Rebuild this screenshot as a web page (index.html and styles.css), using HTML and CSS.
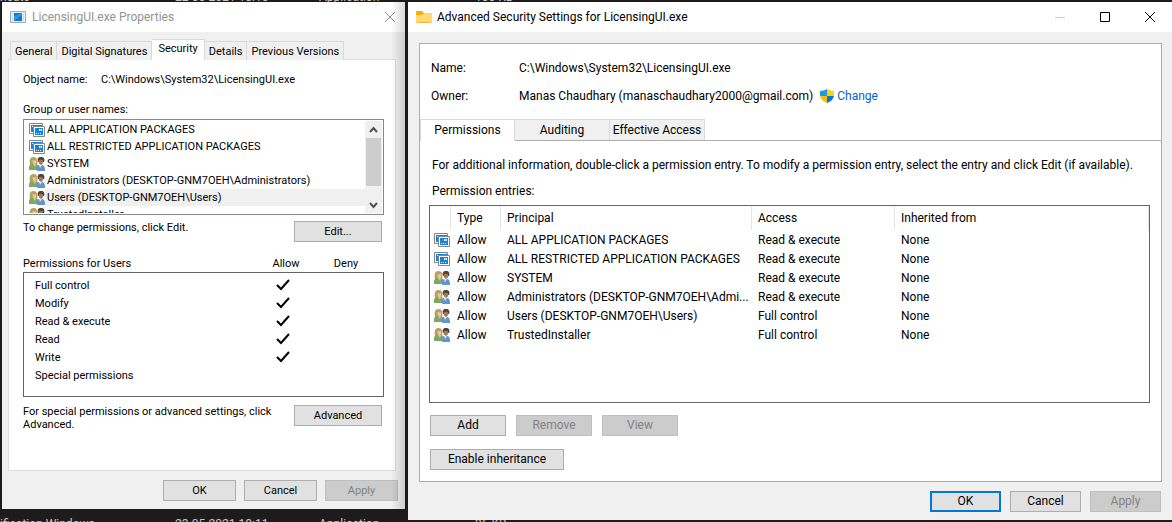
FILE: index.html
```html
<!DOCTYPE html>
<html lang="en">
<head>
<meta charset="utf-8">
<title>Advanced Security Settings for LicensingUI.exe</title>
<link rel="stylesheet" href="styles.css">
</head>
<body>
<svg class="defs" aria-hidden="true">
  <symbol id="package" viewBox="0 0 16 16">
    <path d="M.5 1.500h13v10H.5z" fill="#fff" stroke="#858585"/>
    <path d="M2 3h11v2H5v5H2z" fill="#1583dc"/>
    <path d="M3 4h1v1H3zM6 4h1v1H6zM8 4h1v1H8z" fill="#fff"/>
    <path d="M4.500 4.500h11v10h-11z" fill="#fff" stroke="#858585"/>
    <path d="M6 6h8v7H6z" fill="#1583dc"/>
    <path d="M10 7h3v2h-3zM7 11h1v1H7zM9 11h1v1H9zM11 11h1v1h-1z" fill="#fff"/>
    <path d="M11 7h1v2h-1z" fill="#84bff0"/>
  </symbol>
  <symbol id="people" viewBox="0 0 16 16">
    <path d="M1 9C0 4 1 1 4.500 1S9 4 8 9z" fill="#b5a062"/>
    <path d="M3.500 4Q6 5 7 3.500 8 8 5.500 8.500 3.500 8 3.500 4z" fill="#e5c7a0"/>
    <path d="M0 14V11c0-2 2-3 4-3h3c2 0 2 2 2 6z" fill="#7fa85d"/>
    <path d="M4 8h3l-1 3z" fill="#e0c29c"/>
    <path d="M9 6c-1-3 0-5 3-5s4 2 3 5z" fill="#4b4540"/>
    <path d="M9.500 4.500Q12 3 14 4.500 14.500 8 12 9 9.500 8 9.500 4.500z" fill="#a8774f"/>
    <path d="M7 14c0-3 1-5 4-5h2c2 0 3 2 3 5v1H9z" fill="#6494cc"/>
    <path d="M10 9h3l-2 3z" fill="#dfe8f3"/>
  </symbol>
  <symbol id="check" viewBox="0 0 14 12">
    <path d="M1 6l4 4 8-9" fill="none" stroke="#000" stroke-width="2"/>
  </symbol>
</svg>

<div class="backdrop" aria-hidden="true">
  <div class="file-row"><span>ncate</span><span>22-05-2021 18:10</span><span>Application</span><span>100 KB</span></div>
  <div class="file-row"><span>ification Windows</span><span>23-05-2021 18:11</span><span>Application</span><span>96 KB</span></div>
</div>

<main class="desktop">
  <section class="window properties" aria-label="LicensingUI.exe Properties">
    <header class="titlebar">
      <svg class="app-icon" viewBox="0 0 16 12"><path d="M.5.500h15v11H.5z" fill="#edf1f4" stroke="#9da7ae"/><path d="M2 3h1M2 5h1M2 7h1M2 9h1M13 3h1M13 5h1M13 7h1M13 9h1" stroke="#b4bec5"/><path d="M4 2h8v8H4z" fill="#0a78cf"/><path d="M4 10V5l8-3v2z" fill="#2d96e4"/></svg>
      <h1>LicensingUI.exe Properties</h1>
      <button class="caption" aria-label="Close"><svg viewBox="0 0 10 10"><path d="M0 0l10 10M10 0L0 10" stroke="#8c8c8c"/></svg></button>
    </header>
    <div class="prop-body">
      <div class="tabs" role="tablist">
        <button role="tab">General</button><button role="tab">Digital Signatures</button><button role="tab" class="active" aria-selected="true">Security</button><button role="tab">Details</button><button role="tab">Previous Versions</button>
      </div>
      <div class="sheet">
        <dl class="object"><dt>Object name:</dt><dd>C:\Windows\System32\LicensingUI.exe</dd></dl>
        <p class="label">Group or user names:</p>
        <div class="listbox">
          <ul>
            <li><svg><use href="#package"/></svg><span>ALL APPLICATION PACKAGES</span></li>
            <li><svg><use href="#package"/></svg><span>ALL RESTRICTED APPLICATION PACKAGES</span></li>
            <li><svg><use href="#people"/></svg><span>SYSTEM</span></li>
            <li><svg><use href="#people"/></svg><span>Administrators (DESKTOP-GNM7OEH\Administrators)</span></li>
            <li class="selected"><svg><use href="#people"/></svg><span>Users (DESKTOP-GNM7OEH\Users)</span></li>
            <li><svg><use href="#people"/></svg><span>TrustedInstaller</span></li>
          </ul>
          <div class="scrollbar">
            <svg viewBox="0 0 15 17"><path d="M4 11l3.500-4 3.500 4" fill="none" stroke="#505050" stroke-width="2"/></svg>
            <div class="thumb"></div>
            <svg viewBox="0 0 15 17"><path d="M4 7l3.500 4L11 7" fill="none" stroke="#505050" stroke-width="2"/></svg>
          </div>
        </div>
        <div class="action"><p>To change permissions, click Edit.</p><button class="btn">Edit...</button></div>
        <table class="perms">
          <thead><tr><th>Permissions for Users</th><th>Allow</th><th>Deny</th></tr></thead>
          <tbody>
            <tr><td>Full control</td><td><svg><use href="#check"/></svg></td><td></td></tr>
            <tr><td>Modify</td><td><svg><use href="#check"/></svg></td><td></td></tr>
            <tr><td>Read &amp; execute</td><td><svg><use href="#check"/></svg></td><td></td></tr>
            <tr><td>Read</td><td><svg><use href="#check"/></svg></td><td></td></tr>
            <tr><td>Write</td><td><svg><use href="#check"/></svg></td><td></td></tr>
            <tr><td>Special permissions</td><td></td><td></td></tr>
          </tbody>
        </table>
        <div class="action advanced"><p>For special permissions or advanced settings, click Advanced.</p><button class="btn">Advanced</button></div>
      </div>
      <footer><button class="btn">OK</button><button class="btn">Cancel</button><button class="btn" disabled>Apply</button></footer>
    </div>
  </section>

  <section class="window security" aria-label="Advanced Security Settings for LicensingUI.exe">
    <header class="titlebar">
      <svg class="folder" viewBox="0 0 16 14"><path d="M0 2Q0 1 1 1h5l2 2h7q1 0 1 1v4H0z" fill="#f4ae13"/><path d="M0 5h6l2-2h7q1 0 1 1v8q0 1-1 1H1q-1 0-1-1z" fill="#ffd871"/><path d="M1 12.500h14" stroke="#efb53c"/></svg>
      <h1>Advanced Security Settings for LicensingUI.exe</h1>
      <div class="captions">
        <button class="caption" aria-label="Minimize" disabled><svg viewBox="0 0 10 10"><path d="M0 5.500h10" stroke="#ccc"/></svg></button>
        <button class="caption" aria-label="Maximize"><svg viewBox="0 0 10 10"><path d="M.5.500h9v9h-9z" fill="none" stroke="#000"/></svg></button>
        <button class="caption" aria-label="Close"><svg viewBox="0 0 10 10"><path d="M0 0l10 10M10 0L0 10" stroke="#000"/></svg></button>
      </div>
    </header>
    <div class="sec-body">
      <div class="panel">
        <dl class="details">
          <dt>Name:</dt><dd>C:\Windows\System32\LicensingUI.exe</dd>
          <dt>Owner:</dt><dd>Manas Chaudhary (manaschaudhary2000@gmail.com)
            <a href="#"><svg class="shield" viewBox="0 0 14 14"><path d="M7 0Q4 2 0 2v5h7z" fill="#1b9be5"/><path d="M7 0q3 2 7 2v5H7z" fill="#ffd10a"/><path d="M0 7q1 5 7 7V7z" fill="#fbbd08"/><path d="M14 7q-1 5-7 7V7z" fill="#0b78cf"/></svg>Change</a></dd>
        </dl>
        <div class="tabs" role="tablist">
          <button role="tab" class="active" aria-selected="true">Permissions</button><button role="tab">Auditing</button><button role="tab">Effective Access</button>
        </div>
        <div class="tab-page">
          <p>For additional information, double-click a permission entry. To modify a permission entry, select the entry and click Edit (if available).</p>
          <p>Permission entries:</p>
          <div class="grid-box">
            <table class="entries">
              <colgroup><col class="c-icon"><col class="c-type"><col class="c-principal"><col class="c-access"><col></colgroup>
              <thead><tr><th></th><th>Type</th><th>Principal</th><th>Access</th><th>Inherited from</th></tr></thead>
              <tbody>
                <tr><td><svg><use href="#package"/></svg></td><td>Allow</td><td>ALL APPLICATION PACKAGES</td><td>Read &amp; execute</td><td>None</td></tr>
                <tr><td><svg><use href="#package"/></svg></td><td>Allow</td><td>ALL RESTRICTED APPLICATION PACKAGES</td><td>Read &amp; execute</td><td>None</td></tr>
                <tr><td><svg><use href="#people"/></svg></td><td>Allow</td><td>SYSTEM</td><td>Read &amp; execute</td><td>None</td></tr>
                <tr><td><svg><use href="#people"/></svg></td><td>Allow</td><td>Administrators (DESKTOP-GNM7OEH\Admi...</td><td>Read &amp; execute</td><td>None</td></tr>
                <tr><td><svg><use href="#people"/></svg></td><td>Allow</td><td>Users (DESKTOP-GNM7OEH\Users)</td><td>Full control</td><td>None</td></tr>
                <tr><td><svg><use href="#people"/></svg></td><td>Allow</td><td>TrustedInstaller</td><td>Full control</td><td>None</td></tr>
              </tbody>
            </table>
          </div>
          <div class="row"><button class="btn">Add</button><button class="btn" disabled>Remove</button><button class="btn" disabled>View</button></div>
          <div class="row"><button class="btn wide">Enable inheritance</button></div>
        </div>
      </div>
      <footer><button class="btn default">OK</button><button class="btn">Cancel</button><button class="btn" disabled>Apply</button></footer>
    </div>
  </section>
</main>
</body>
</html>
```
FILE: styles.css
```css
* { box-sizing: border-box; }
body {
  margin: 0;
  background: #1d1b1c;
  color: #000;
  font: 12px/16px Roboto, "Open Sans", sans-serif;
  overflow: hidden;
}
h1, p, dl, dd, ul { margin: 0; padding: 0; }
button { font: inherit; color: inherit; margin: 0; padding: 0; }
.defs { position: absolute; width: 0; height: 0; }
svg { display: block; flex: none; }

.backdrop {
  position: absolute;
  inset: -10px 0 -9px;
  z-index: -1;
  display: flex;
  flex-direction: column;
  justify-content: space-between;
  color: #c8c8c8;
  overflow: hidden;
}
.file-row {
  display: grid;
  grid-template-columns: 175px 144px 156px 1fr;
  line-height: 14px;
}

.desktop {
  display: grid;
  grid-template-columns: 403px minmax(0, 1fr);
  column-gap: 3px;
  align-items: start;
  padding: 2px 0 0 2px;
}
.window { background: #f0f0f0; }
.titlebar {
  display: flex;
  align-items: center;
  height: 30px;
  background: #fff;
}
.titlebar h1 { flex: 1; font-size: 12px; font-weight: 400; white-space: nowrap; }
.caption { border: 0; background: none; display: grid; place-items: center; }
.caption svg { width: 10px; height: 10px; overflow: visible; }

.btn {
  height: 21px;
  border: 1px solid #adadad;
  background: #e1e1e1;
  text-align: center;
  line-height: 19px;
}
.btn:disabled { background: #ccc; border-color: #bfbfbf; color: #838383; }
.btn.default { border: 2px solid #0078d7; line-height: 17px; }
footer { display: flex; justify-content: flex-end; }

.tabs { display: flex; align-items: flex-end; }
.tabs button { border: 1px solid #d9d9d9; background: #f0f0f0; white-space: nowrap; }
.tabs button + button { border-left: 0; }
.tabs .active { background: #fff; border-bottom: 0; }

/* Properties window */
.properties {
  position: relative;
  font-size: 11px;
  line-height: 13px;
}
.properties::after {
  content: "";
  position: absolute;
  inset: 0 0 0 auto;
  width: 14px;
  background: linear-gradient(to right, transparent, rgba(0, 0, 0, .14));
  pointer-events: none;
}
.properties .titlebar { padding: 0 10px 0 8px; gap: 6px; }
.properties h1 { color: #939393; }
.app-icon { width: 16px; height: 12px; }
.prop-body { padding: 7px 7px 8px 6px; }
.properties .tabs { height: 21px; padding-left: 2px; }
.properties .tabs button { height: 19px; padding: 0 4px; border-bottom: 0; }
.properties .tabs .active { height: 21px; padding: 0 6px 3px; }
.sheet {
  border: 1px solid #dcdcdc;
  background: #fff;
  margin: -1px 2px 9px 0;
  padding: 13px 11px 39px 14px;
}
.properties .tabs .active { position: relative; }
.object { display: grid; grid-template-columns: 78px 1fr; margin-bottom: 17px; }
.label { margin-bottom: 3px; }
.listbox {
  display: flex;
  height: 96px;
  padding: 1px;
  border: 1px solid #828790;
  overflow: hidden;
}
.listbox ul { flex: 1; height: 92px; overflow: hidden; list-style: none; }
.listbox li { display: flex; height: 17px; padding-left: 4px; align-items: center; }
.listbox li svg { width: 16px; height: 16px; }
.listbox li span { flex: 1; padding-left: 2px; line-height: 17px; white-space: nowrap; }
.listbox .selected span { background: #f0f0f0; }
.scrollbar { width: 17px; padding: 0 1px; background: #f0f0f0; display: flex; flex-direction: column; }
.scrollbar svg { width: 15px; height: 17px; }
.thumb { height: 48px; margin-bottom: auto; background: #cdcdcd; }
.action { display: flex; justify-content: space-between; align-items: flex-start; padding: 6px 2px 0 0; }
.action .btn { width: 88px; }
.perms { display: block; margin-top: 15px; }
.perms thead, .perms tbody { display: block; }
.perms tr { display: grid; grid-template-columns: 1fr 60px 60px; align-items: center; }
.perms th { padding: 0; font-weight: 400; text-align: center; }
.perms td { padding: 0; display: grid; justify-items: center; }
.perms th:first-child { text-align: left; }
.perms thead { padding: 0 8px 2px 0; }
.perms tbody { border: 1px solid #646464; padding: 3px 11px 12px; }
.perms tbody tr { height: 18px; grid-template-columns: 1fr 60px 59px; }
.perms td:first-child { justify-items: start; }
.perms td svg { width: 14px; height: 12px; }
.advanced { padding-top: 8px; }
.advanced p { width: 250px; }
.properties footer { gap: 8px; }
.properties footer .btn { width: 73px; }

/* Advanced security window */
.security .titlebar { padding-left: 8px; }
.folder { width: 16px; height: 14px; margin-right: 5px; }
.captions { display: flex; }
.captions .caption { width: 45px; height: 30px; }
.sec-body { padding: 11px 10px 8px 11px; }
.panel { border: 1px solid #adadad; background: #fff; }
.details {
  display: grid;
  grid-template-columns: 88px 1fr;
  row-gap: 12px;
  padding: 16px 11px 15px;
}
.details dd, .details a { display: flex; align-items: center; white-space: nowrap; }
.details a { color: #0066cc; text-decoration: none; margin-left: 7px; gap: 3px; }
.shield { width: 14px; height: 14px; }
.security .tabs button { width: 95px; height: 21px; line-height: 19px; border-bottom: 0; }
.security .tabs .active { height: 22px; margin-bottom: -1px; position: relative; }
.tab-page { border-top: 1px solid #adadad; padding: 16px 11px 11px 9px; }
.tab-page p { padding-left: 3px; margin-bottom: 10px; white-space: nowrap; }
.tab-page p + p { margin-bottom: 6px; }
.grid-box { border: 1px solid #646464; height: 198px; margin-bottom: 12px; }
.entries { width: 100%; table-layout: fixed; border-collapse: separate; border-spacing: 0; }
.c-icon { width: 21px; }
.c-type { width: 50px; }
.c-principal { width: 251px; }
.c-access { width: 143px; }
.entries th {
  height: 24px;
  padding: 0 6px;
  border-right: 1px solid #e5e5e5;
  font-weight: 400;
  text-align: left;
}
.entries td {
  height: 19px;
  padding: 0 0 0 6px;
  overflow: hidden;
  text-overflow: ellipsis;
  white-space: nowrap;
}
.entries td:first-child { padding: 0 0 0 4px; }
.entries td svg { width: 16px; height: 16px; }
.row { display: flex; gap: 10px; padding-left: 1px; }
.row + .row { margin-top: 13px; }
.row .btn { width: 76px; }
.row .wide { width: 134px; }
.security footer { gap: 9px; padding: 9px 1px 0 0; }
.security footer .btn { width: 71px; }
```
